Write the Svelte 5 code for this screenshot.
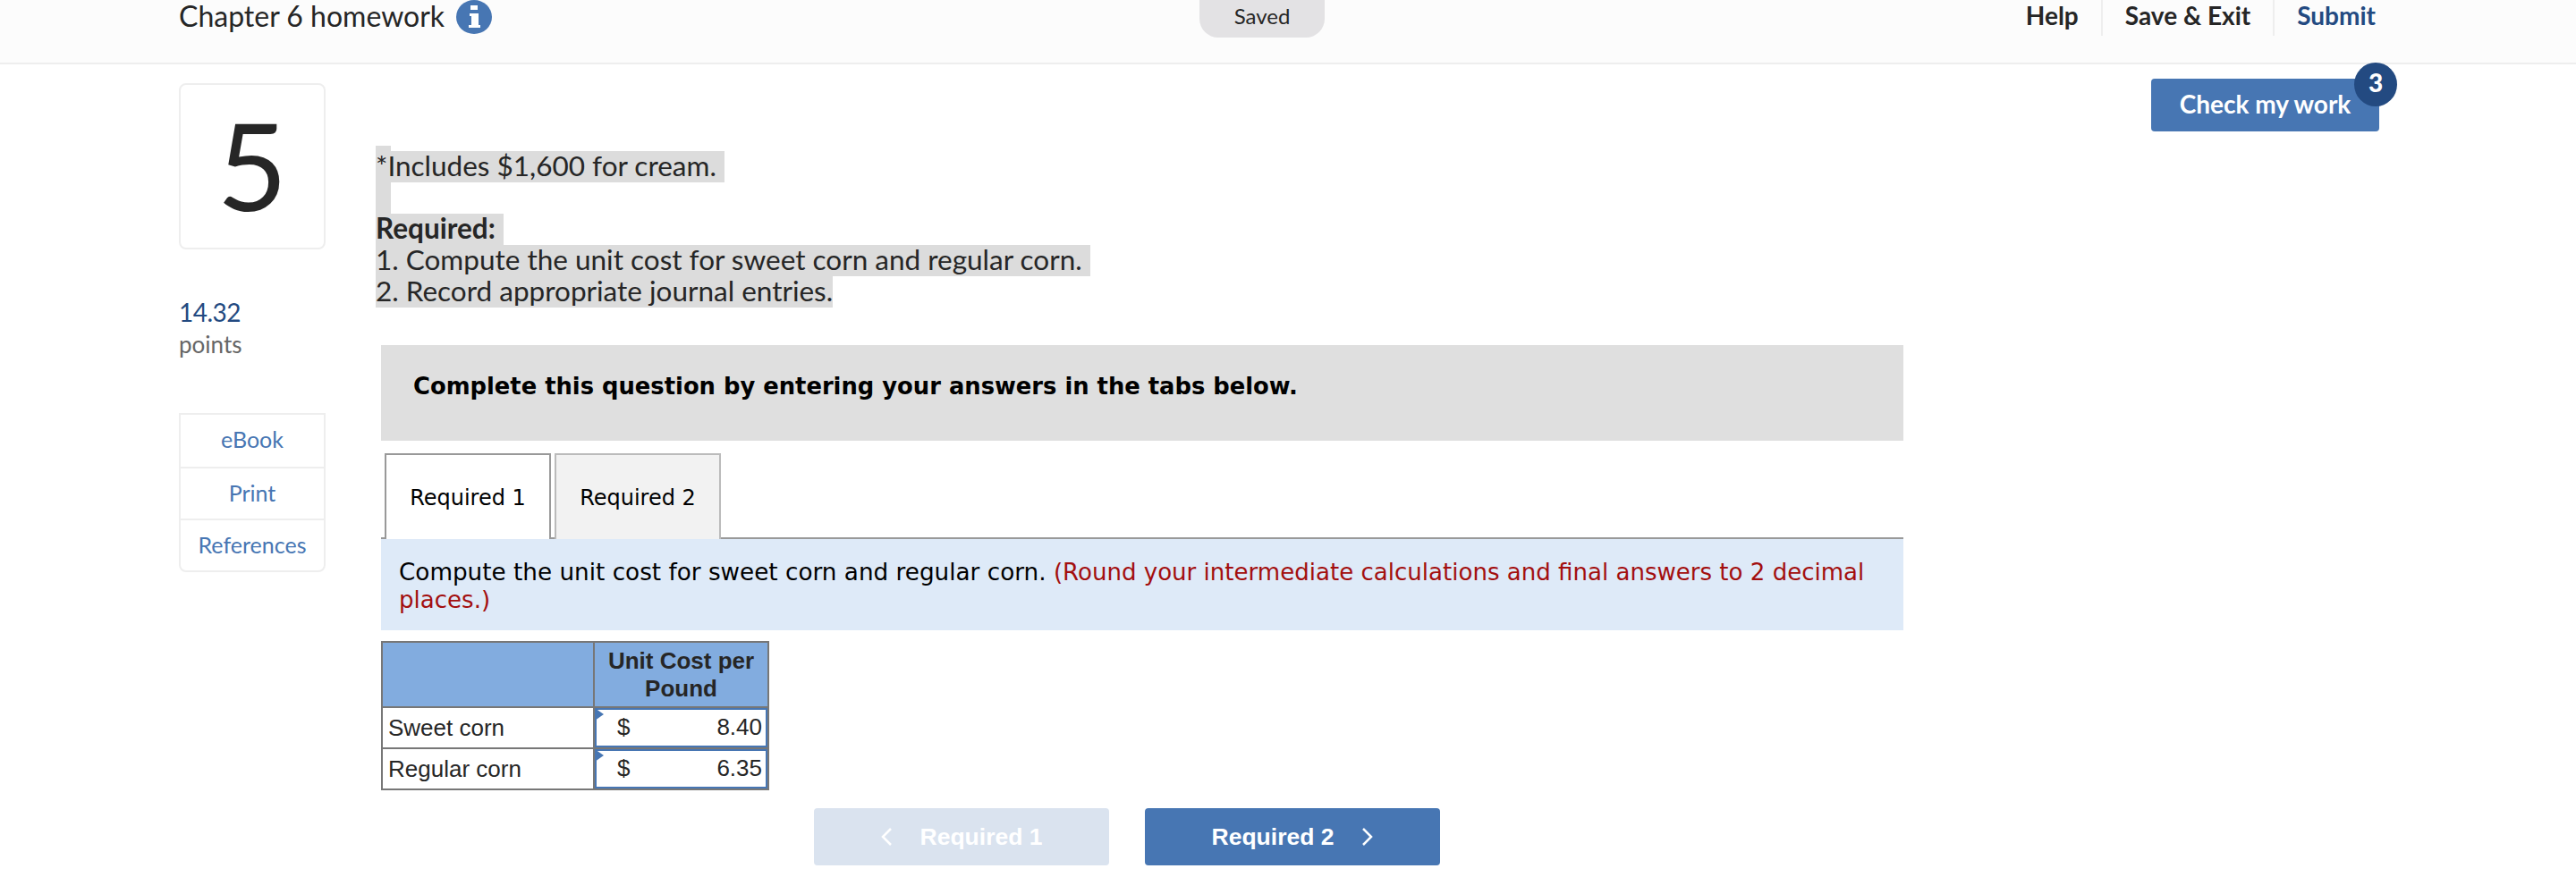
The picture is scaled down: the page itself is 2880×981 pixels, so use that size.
<script>
  const links = ["eBook", "Print", "References"];
  const rows = [
    { name: "Sweet corn", value: "8.40" },
    { name: "Regular corn", value: "6.35" }
  ];
</script>

<header class="topbar">
  <div class="title">
    <span>Chapter 6 homework</span>
    <svg class="info" viewBox="0 0 40 38" aria-hidden="true">
      <ellipse cx="20" cy="19" rx="20" ry="19" fill="#4776b3" />
      <rect x="16" y="6" width="8" height="5" fill="#fff" />
      <path d="M15 15h10v13h2v3H14v-3h3V18h-2z" fill="#fff" />
    </svg>
  </div>
  <div class="saved">Saved</div>
  <nav class="actions">
    <a href="#help">Help</a>
    <a href="#save">Save &amp; Exit</a>
    <a href="#submit" class="submit">Submit</a>
  </nav>
</header>

<div class="page">
  <aside class="side">
    <div class="qnum">5</div>
    <div class="score">14.32</div>
    <div class="points">points</div>
    <ul class="links">
      {#each links as link}
        <li><a href="#{link}">{link}</a></li>
      {/each}
    </ul>
  </aside>

  <main class="main">
    <div class="prompt">
      <div class="gap gap-top"></div>
      <div class="line">*Includes $1,600 for cream.</div>
      <div class="gap gap-mid"></div>
      <div class="line"><strong>Required:</strong></div>
      <div class="line">1. Compute the unit cost for sweet corn and regular corn.</div>
      <div class="line last">2. Record appropriate journal entries.</div>
    </div>

    <div class="work">
      <div class="banner">Complete this question by entering your answers in the tabs below.</div>

      <div class="tabs">
        <div class="tab active">Required 1</div>
        <div class="tab">Required 2</div>
      </div>

      <div class="instructions">
        Compute the unit cost for sweet corn and regular corn.
        <span class="red">(Round your intermediate calculations and final answers to 2 decimal places.)</span>
      </div>

      <table>
        <thead>
          <tr>
            <th class="first"></th>
            <th>Unit Cost per Pound</th>
          </tr>
        </thead>
        <tbody>
          {#each rows as row}
            <tr>
              <td class="name">{row.name}</td>
              <td class="cell">
                <div class="answer">
                  <span class="dollar">$</span>
                  <span>{row.value}</span>
                </div>
              </td>
            </tr>
          {/each}
        </tbody>
      </table>

      <div class="pager">
        <button class="disabled">
          <svg viewBox="0 0 12 20" aria-hidden="true"><path d="M11 1 2 10l9 9" /></svg>
          Required 1
        </button>
        <button>
          Required 2
          <svg viewBox="0 0 12 20" aria-hidden="true"><path d="m1 1 9 9-9 9" /></svg>
        </button>
      </div>
    </div>
  </main>

  <div class="check-col">
    <button class="check">
      Check my work
      <span class="badge">3</span>
    </button>
  </div>
</div>

<style>
  :global(body) {
    background: #fff;
    color: #262626;
    font-family: Lato, "Open Sans", sans-serif;
  }

  .topbar {
    display: grid;
    grid-template-columns: 1141px 140px 1fr;
    height: 70px;
    padding-left: 200px;
    background: #fcfcfc;
    border-bottom: 2px solid #eee;
  }

  .title {
    display: flex;
    align-items: flex-start;
    gap: 13px;
    font-size: 32px;
    line-height: 36px;
  }

  .info {
    width: 40px;
    height: 38px;
  }

  .saved {
    height: 42px;
    line-height: 36px;
    border-radius: 0 0 21px 21px;
    background: #e3e2e4;
    text-align: center;
    font-size: 24px;
  }

  .actions {
    display: flex;
    justify-content: flex-end;
    align-items: flex-start;
    padding-right: 224px;
  }

  .actions a {
    height: 40px;
    line-height: 35px;
    padding: 0 25px;
    border-left: 2px solid #eee;
    color: #262626;
    font-size: 28px;
    font-weight: 700;
    text-decoration: none;
  }

  .actions a:first-child {
    border-left: 0;
  }

  .actions a:last-child {
    padding-right: 0;
  }

  .actions .submit {
    color: #234a81;
  }

  .page {
    display: flex;
    align-items: flex-start;
    padding-left: 200px;
  }

  .side {
    flex: none;
    width: 164px;
    padding-top: 21px;
  }

  .qnum {
    box-sizing: border-box;
    height: 186px;
    border: 2px solid #eee;
    border-radius: 8px;
    color: #262626;
    font-size: 136px;
    line-height: 178px;
    text-align: center;
  }

  .score {
    margin-top: 52px;
    color: #234a81;
    font-size: 28px;
    letter-spacing: -0.5px;
    line-height: 36px;
  }

  .points {
    color: #666;
    font-size: 26px;
    line-height: 36px;
  }

  .links {
    margin: 59px 0 0;
    padding: 0;
    border: 2px solid #eee;
    border-radius: 0 0 8px 8px;
    list-style: none;
  }

  .links li {
    box-sizing: border-box;
    height: 58px;
    border-top: 2px solid #eee;
    text-align: center;
    line-height: 55px;
    font-size: 25px;
  }

  .links li:first-child {
    border-top: 0;
  }

  .links a {
    color: #4776b3;
    text-decoration: none;
  }

  .main {
    flex: none;
    width: 1708px;
    margin-left: 56px;
    padding-top: 91px;
  }

  .prompt {
    font-size: 31.5px;
    color: #262626;
  }

  .gap {
    width: 17px;
    background: #dcdcdc;
  }

  .gap-top {
    height: 6px;
  }

  .gap-mid {
    height: 35px;
  }

  .line {
    width: fit-content;
    height: 35px;
    line-height: 33px;
    padding-right: 9px;
    background: #dcdcdc;
  }

  .line.last {
    padding-right: 0;
  }

  .work {
    margin: 42px 0 0 6px;
    font-family: "DejaVu Sans", sans-serif;
    color: #000;
  }

  .banner {
    box-sizing: border-box;
    height: 107px;
    padding: 29px 36px 0;
    background: #dfdfdf;
    font-size: 25.8px;
    line-height: 34px;
    font-weight: 700;
  }

  .tabs {
    display: flex;
    gap: 4px;
    height: 94px;
    margin-top: 14px;
    padding-left: 4px;
    border-bottom: 2px solid #999;
  }

  .tab {
    box-sizing: border-box;
    width: 186px;
    height: 96px;
    border: 2px solid #bbb;
    border-bottom: 0;
    background: #f2f2f2;
    text-align: center;
    font-size: 24px;
    line-height: 96px;
  }

  .tab.active {
    border-color: #999;
    background: #fff;
  }

  .instructions {
    position: relative;
    box-sizing: border-box;
    height: 102px;
    padding: 22px 20px 0;
    background: #deeaf8;
    font-size: 26.25px;
    line-height: 31px;
  }

  .red {
    color: #a30f0f;
    font-size: 26.05px;
  }

  table {
    width: 434px;
    margin-top: 12px;
    border-collapse: collapse;
    table-layout: fixed;
    font-family: "Liberation Sans", sans-serif;
    font-size: 26px;
    color: #262626;
  }

  th,
  td {
    padding: 0;
    border: 2px solid #777;
  }

  th {
    box-sizing: border-box;
    height: 73px;
    padding: 0 8px;
    background: #82acdf;
    line-height: 31px;
  }

  th.first {
    width: 237px;
    padding: 0;
  }

  td {
    box-sizing: border-box;
    height: 46px;
  }

  td.name {
    padding-left: 6px;
  }

  .answer {
    position: relative;
    display: flex;
    justify-content: space-between;
    box-sizing: border-box;
    height: 44px;
    padding: 0 4px 0 23px;
    border: 2px solid #4776b3;
    line-height: 38px;
  }

  .answer::before {
    content: "";
    position: absolute;
    left: -2px;
    top: -2px;
    border-left: 10px solid #4776b3;
    border-top: 7px solid transparent;
    border-bottom: 7px solid transparent;
  }

  .pager {
    display: flex;
    gap: 40px;
    margin: 20px 0 0 484px;
  }

  .pager button {
    display: flex;
    justify-content: center;
    align-items: center;
    gap: 32px;
    width: 330px;
    height: 64px;
    padding: 0;
    border: 0;
    border-radius: 4px;
    background: #4776b3;
    color: #fff;
    font-family: "Liberation Sans", sans-serif;
    font-size: 26.5px;
    font-weight: 700;
  }

  .pager button.disabled {
    background: #dae3ef;
  }

  .pager svg {
    width: 12px;
    height: 20px;
    fill: none;
    stroke: #fff;
    stroke-width: 2.5;
  }

  .check-col {
    flex: 1;
    display: flex;
    justify-content: flex-end;
    padding: 16px 220px 0 0;
  }

  .check {
    position: relative;
    width: 255px;
    height: 59px;
    padding: 0 0 4px;
    border: 0;
    border-radius: 4px;
    background: #4776b3;
    color: #fff;
    font-family: Lato, "Open Sans", sans-serif;
    font-size: 28px;
    font-weight: 700;
  }

  .badge {
    position: absolute;
    top: -18px;
    right: -20px;
    width: 48px;
    height: 49px;
    border-radius: 50%;
    background: #234a81;
    line-height: 44px;
    font-weight: 900;
    text-align: center;
  }
</style>
